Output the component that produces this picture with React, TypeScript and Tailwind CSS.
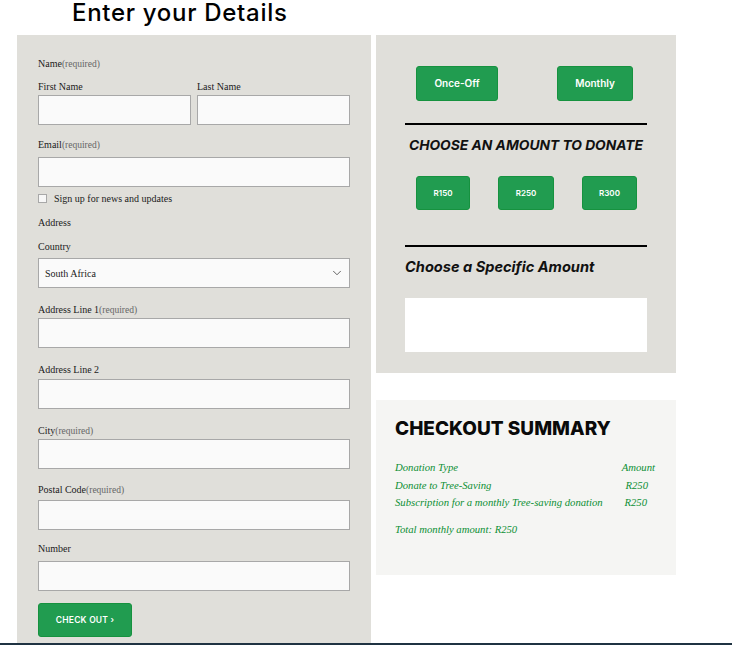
import { ChevronDown } from "lucide-react";

const sans = "font-['Inter','Open_Sans',sans-serif]";
const serif = "font-['Liberation_Serif','DejaVu_Serif',serif]";

function Label({ text, required, className = "" }: { text: string; required?: boolean; className?: string }) {
  return (
    <div className={`${serif} text-[10px] leading-[12px] text-[#1b1b1b] ${className}`}>
      {text}
      {required && <span className="text-[#666] text-[9.5px]">(required)</span>}
    </div>
  );
}

function Field({ className = "" }: { className?: string }) {
  return <input className={`block w-full h-[30px] bg-[#fafafa] border border-[#a8a8a8] outline-none ${className}`} />;
}

function GreenButton({ children, className = "" }: { children: React.ReactNode; className?: string }) {
  return (
    <button
      className={`${sans} bg-[#219c50] border border-[#16923f] rounded-[3px] text-white font-semibold flex items-center justify-center ${className}`}
    >
      {children}
    </button>
  );
}

export default function App() {
  return (
    <div className="w-[732px] h-[645px] overflow-hidden bg-white flex flex-col">
      <h1 className={`${sans} shrink-0 text-[24px] leading-[24px] tracking-[0.7px] font-medium text-black pl-[72px] pt-[1px] h-[35px]`}>
        Enter your Details
      </h1>

      <div className="flex shrink-0 gap-[5px] pl-[17px] items-start">
        {/* Form */}
        <form className="w-[354px] h-[608px] bg-[#e0dfda] px-[21px] pt-[23px]">
          <Label text="Name" required />
          <div className="flex gap-[6px] mt-[11px]">
            <div className="flex-1">
              <Label text="First Name" className="text-[9.5px]" />
              <Field className="mt-[2px]" />
            </div>
            <div className="flex-1">
              <Label text="Last Name" className="text-[9.5px]" />
              <Field className="mt-[2px]" />
            </div>
          </div>

          <Label text="Email" required className="mt-[14px]" />
          <Field className="mt-[6px]" />
          <label className="flex items-center gap-[7px] mt-[5px] h-[12px]">
            <span className="w-[9px] h-[9px] bg-[#f7f7f7] border border-[#a8a8a8]" />
            <span className={`${serif} text-[10px] text-[#1b1b1b]`}>Sign up for news and updates</span>
          </label>

          <Label text="Address" className="mt-[13px]" />
          <Label text="Country" className="mt-[12px] text-[9.5px]" />
          <div className="mt-[5px] h-[30px] bg-[#fafafa] border border-[#a8a8a8] flex items-center justify-between pl-[6px] pr-[5px]">
            <span className={`${serif} text-[10px] text-[#1b1b1b]`}>South Africa</span>
            <ChevronDown size={14} strokeWidth={1.3} className="text-[#333]" />
          </div>

          <Label text="Address Line 1" required className="mt-[16px] text-[9.5px]" />
          <Field className="mt-[2px]" />
          <Label text="Address Line 2" className="mt-[16px] text-[9.5px]" />
          <Field className="mt-[3px]" />
          <Label text="City" required className="mt-[16px]" />
          <Field className="mt-[2px]" />
          <Label text="Postal Code" required className="mt-[15px] text-[9.5px]" />
          <Field className="mt-[4px]" />
          <Label text="Number" className="mt-[13px]" />
          <Field className="mt-[6px]" />

          <GreenButton className="mt-[12px] w-[94px] h-[34px] text-[8.5px] tracking-[0.2px]">CHECK OUT ›</GreenButton>
        </form>

        {/* Right column */}
        <div className="w-[300px] flex flex-col gap-[27px]">
          <div className="bg-[#e0dfda] h-[338px] px-[29px] pt-[31px]">
            <div className="flex justify-between pl-[11px] pr-[14px]">
              <GreenButton className="w-[82px] h-[35px] text-[10px]">Once-Off</GreenButton>
              <GreenButton className="w-[76px] h-[35px] text-[10px]">Monthly</GreenButton>
            </div>
            <div className="h-[2px] bg-black mt-[22px]" />
            <div className={`${sans} text-[13.8px] font-bold italic text-[#111] text-center mt-[12px] leading-[17px] whitespace-nowrap`}>
              CHOOSE AN AMOUNT TO DONATE
            </div>
            <div className="flex gap-[28px] pl-[11px] mt-[22px]">
              <GreenButton className="w-[54px] h-[34px] text-[8px]">R150</GreenButton>
              <GreenButton className="w-[56px] h-[34px] text-[8px]">R250</GreenButton>
              <GreenButton className="w-[55px] h-[34px] text-[8px]">R300</GreenButton>
            </div>
            <div className="h-[2px] bg-black mt-[35px]" />
            <div className={`${sans} text-[14.6px] font-bold italic text-[#111] mt-[11px] leading-[18px]`}>
              Choose a Specific Amount
            </div>
            <div className="h-[54px] bg-white mt-[22px]" />
          </div>

          <div className="bg-[#f5f5f3] h-[175px] pl-[19px] pr-[21px] pt-[17px]">
            <div className={`${sans} text-[19px] font-extrabold text-[#0a0a0a] leading-[24px]`}>CHECKOUT SUMMARY</div>
            <div className={`${serif} italic text-[10.7px] text-[#0c8f33] mt-[18px] leading-[17.5px]`}>
              <div className="flex justify-between">
                <span>Donation Type</span>
                <span>Amount</span>
              </div>
              <div className="flex justify-between">
                <span>Donate to Tree-Saving</span>
                <span className="pr-[7px]">R250</span>
              </div>
              <div className="flex justify-between">
                <span>Subscription for a monthly Tree-saving donation</span>
                <span className="pr-[8px]">R250</span>
              </div>
              <div className="mt-[9px]">Total monthly amount: R250</div>
            </div>
          </div>
        </div>
      </div>

      <div className="h-[40px] bg-[#1f3342] shrink-0" />
    </div>
  );
}
